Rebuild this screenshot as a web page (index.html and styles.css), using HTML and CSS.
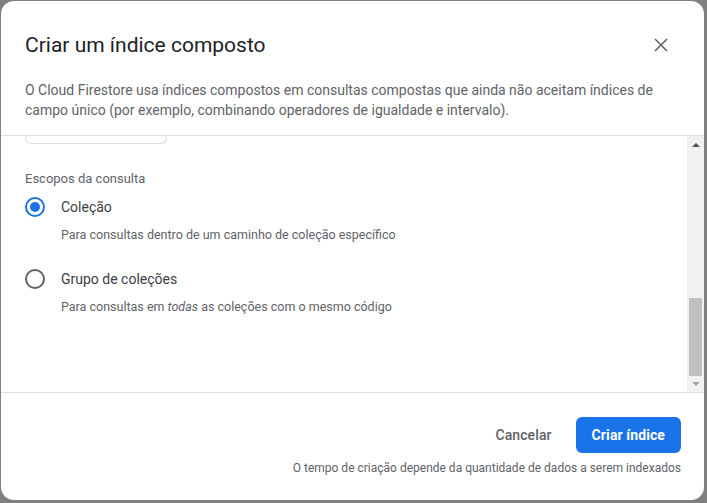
FILE: index.html
```html
<!DOCTYPE html>
<html lang="pt">
<head>
<meta charset="utf-8">
<link rel="stylesheet" href="styles.css">
</head>
<body>
<div class="dialog">
  <div class="header">
    <div class="title-row">
      <h1 class="title">Criar um índice composto</h1>
      <button class="close" aria-label="Fechar">
        <svg width="14" height="14" viewBox="0 0 14 14"><path d="M1 1L13 13M13 1L1 13" stroke="#5f6368" stroke-width="1.6" fill="none"/></svg>
      </button>
    </div>
    <p class="desc">O Cloud Firestore usa índices compostos em consultas compostas que ainda não aceitam índices de campo único (por exemplo, combinando operadores de igualdade e intervalo).</p>
  </div>
  <div class="body">
    <div class="content">
      <div class="field-stub"></div>
      <div class="group-label">Escopos da consulta</div>
      <div class="option">
        <span class="radio checked"></span>
        <span class="option-label">Coleção</span>
      </div>
      <div class="option-desc">Para consultas dentro de um caminho de coleção específico</div>
      <div class="option second">
        <span class="radio"></span>
        <span class="option-label">Grupo de coleções</span>
      </div>
      <div class="option-desc">Para consultas em <em>todas</em> as coleções com o mesmo código</div>
    </div>
    <div class="scrollbar">
      <div class="sb-btn up"><span class="tri-up"></span></div>
      <div class="sb-space"></div>
      <div class="sb-thumb"></div>
      <div class="sb-btn down"><span class="tri-down"></span></div>
    </div>
  </div>
  <div class="footer">
    <div class="actions">
      <button class="btn-text">Cancelar</button>
      <button class="btn-primary">Criar índice</button>
    </div>
    <div class="note">O tempo de criação depende da quantidade de dados a serem indexados</div>
  </div>
</div>
</body>
</html>
```

FILE: styles.css
```css
* { box-sizing: border-box; }
html, body { margin: 0; padding: 0; }
body {
  background: #808080;
  width: 707px;
  height: 503px;
  overflow: hidden;
  font-family: Roboto, "Liberation Sans", Arial, sans-serif;
}
.dialog {
  margin: 1px 3px 0 1px;
  width: 703px;
  height: 499px;
  background: #fff;
  border-radius: 13px;
  display: flex;
  flex-direction: column;
  overflow: hidden;
}
.header {
  padding: 30px 24px 15px 24px;
}
.title-row {
  display: flex;
  align-items: center;
  justify-content: space-between;
  height: 28px;
}
.title {
  margin: 0;
  font-size: 21px;
  font-weight: 400;
  color: #202124;
  line-height: 28px;
  letter-spacing: 0;
}
.close {
  border: none;
  background: none;
  padding: 0;
  width: 14px;
  height: 14px;
  margin-right: 12px;
  display: flex;
}
.desc {
  margin: 21px 0 0 0;
  font-size: 14px;
  line-height: 20px;
  color: #5f6368;
}
.body {
  height: 258px;
  border-top: 1px solid #e0e0e0;
  border-bottom: 1px solid #e0e0e0;
  display: flex;
}
.content {
  flex: 1;
  padding: 0 24px;
  overflow: hidden;
}
.field-stub {
  width: 142px;
  height: 8px;
  border: 1px solid #dadce0;
  border-top: none;
  border-radius: 0 0 6px 6px;
}
.group-label {
  margin-top: 25px;
  font-size: 13px;
  line-height: 20px;
  color: #5f6368;
}
.option {
  margin-top: 8px;
  display: flex;
  align-items: center;
  height: 20px;
}
.option.second { margin-top: 24px; }
.radio {
  width: 20px;
  height: 20px;
  border: 2px solid #5f6368;
  border-radius: 50%;
  display: flex;
  align-items: center;
  justify-content: center;
}
.radio.checked { border-color: #1a73e8; }
.radio.checked::after {
  content: "";
  width: 10px;
  height: 10px;
  border-radius: 50%;
  background: #1a73e8;
}
.option-label {
  margin-left: 16px;
  font-size: 14px;
  color: #3c4043;
}
.option-desc {
  margin-top: 8px;
  margin-left: 36px;
  font-size: 12.5px;
  line-height: 20px;
  color: #5f6368;
}
.scrollbar {
  width: 17px;
  background: #f1f1f1;
  display: flex;
  flex-direction: column;
}
.sb-btn {
  display: flex;
  align-items: center;
  justify-content: center;
}
.sb-btn.up { height: 17px; }
.sb-btn.down { height: 16px; }
.sb-space { flex: 1; }
.sb-thumb {
  height: 78px;
  margin: 0 2px;
  background: #c1c1c1;
}
.tri-up {
  width: 0; height: 0;
  border-left: 4px solid transparent;
  border-right: 4px solid transparent;
  border-bottom: 4px solid #505050;
}
.tri-down {
  width: 0; height: 0;
  border-left: 4px solid transparent;
  border-right: 4px solid transparent;
  border-top: 4px solid #a3a3a3;
}
.footer {
  padding: 24px 23px 24px 24px;
  display: flex;
  flex-direction: column;
  align-items: flex-end;
}
.actions {
  display: flex;
  gap: 8px;
}
.btn-text, .btn-primary {
  font-family: Roboto, "Liberation Sans", Arial, sans-serif;
  font-size: 14px;
  font-weight: 500;
  height: 36px;
  padding: 0 16px;
  border: none;
  border-radius: 6px;
  letter-spacing: 0.1px;
}
.btn-text {
  background: none;
  color: #5f6368;
}
.btn-primary {
  background: #1a73e8;
  color: #fff;
  font-weight: 700;
}
.note {
  margin-top: 7px;
  font-size: 12px;
  line-height: 16px;
  color: #5f6368;
}
```
